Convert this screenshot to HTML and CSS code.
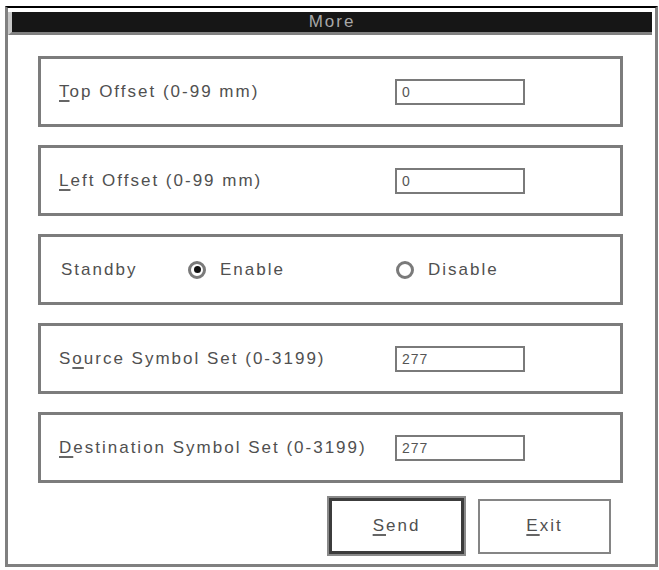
FILE: index.html
```html
<!DOCTYPE html>
<html>
<head>
<meta charset="utf-8">
<title>More</title>
<link rel="stylesheet" href="styles.css">
</head>
<body>
<div class="window">
  <div class="title-wrap"><div class="titlebar">More</div></div>
  <div class="content">
    <div class="group">
      <span class="label"><u>T</u>op Offset (0-99 mm)</span>
      <div class="input">0</div>
    </div>
    <div class="group">
      <span class="label"><u>L</u>eft Offset (0-99 mm)</span>
      <div class="input">0</div>
    </div>
    <div class="group">
      <span class="label label-short">Standby</span>
      <span class="radio-opt opt-enable"><span class="radio checked"></span><span class="radio-text">Enable</span></span>
      <span class="radio-opt"><span class="radio"></span><span class="radio-text">Disable</span></span>
    </div>
    <div class="group">
      <span class="label">S<u>o</u>urce Symbol Set (0-3199)</span>
      <div class="input">277</div>
    </div>
    <div class="group">
      <span class="label"><u>D</u>estination Symbol Set (0-3199)</span>
      <div class="input">277</div>
    </div>
    <div class="buttons">
      <div class="btn btn-default"><u>S</u>end</div>
      <div class="btn"><u>E</u>xit</div>
    </div>
  </div>
</div>
</body>
</html>
```
FILE: styles.css
```css
* { box-sizing: border-box; }
html, body { margin: 0; padding: 0; background: #fff; }
body { width: 659px; height: 570px; font-family: "Liberation Sans", Arial, sans-serif; }

.window {
  margin: 6px 0 0 5px;
  width: 653px;
  border-top: 2px solid #000;
  border-left: 3px solid #808080;
  border-right: 3px solid #808080;
  border-bottom: 3px solid #808080;
}
.title-wrap { padding-top: 4px; }
.titlebar {
  height: 23px;
  margin-right: 3px;
  background: #161616;
  border-left: 4px solid #c8c8c8;
  border-bottom: 3px solid #808080;
  color: #a8a8a8;
  font-size: 17px;
  letter-spacing: 2px;
  line-height: 20px;
  text-align: center;
}
.content {
  padding: 21px 32px 8px 30px;
  display: flex;
  flex-direction: column;
  gap: 18px;
}
.group {
  height: 71px;
  border: 3px solid #7c7c7c;
  display: flex;
  align-items: center;
  padding-left: 18px;
  color: #505050;
  font-size: 17px;
  letter-spacing: 2px;
}
.label { flex: none; width: 336px; }
.label-short { width: 129px; padding-left: 2px; }
u { text-decoration-thickness: 2px; text-underline-offset: 3px; text-decoration-color: #666; }
.input {
  flex: none;
  width: 130px;
  height: 26px;
  border: 2px solid #7a7a7a;
  padding-left: 5px;
  font-size: 14px;
  letter-spacing: 1px;
  line-height: 22px;
  color: #555;
}
.radio-opt { display: flex; align-items: center; }
.opt-enable { width: 208px; }
.radio {
  flex: none;
  width: 18px;
  height: 18px;
  border: 3px solid #7a7a7a;
  border-radius: 50%;
  display: flex;
  align-items: center;
  justify-content: center;
}
.radio.checked::after {
  content: "";
  width: 7px;
  height: 7px;
  border-radius: 50%;
  background: #111;
}
.radio-text { margin-left: 14px; }
.buttons {
  margin-top: -5px;
  display: flex;
  justify-content: flex-end;
  align-items: center;
  gap: 12px;
  padding-right: 12px;
  height: 60px;
}
.btn {
  display: flex;
  align-items: center;
  justify-content: center;
  color: #505050;
  font-size: 17px;
  letter-spacing: 2px;
  width: 133px;
  height: 55px;
  border: 2px solid #858585;
}
.btn-default {
  width: 139px;
  height: 60px;
  border: 2px solid #8a8a8a;
  box-shadow: inset 0 0 0 3px #3c3c3c;
}
```
